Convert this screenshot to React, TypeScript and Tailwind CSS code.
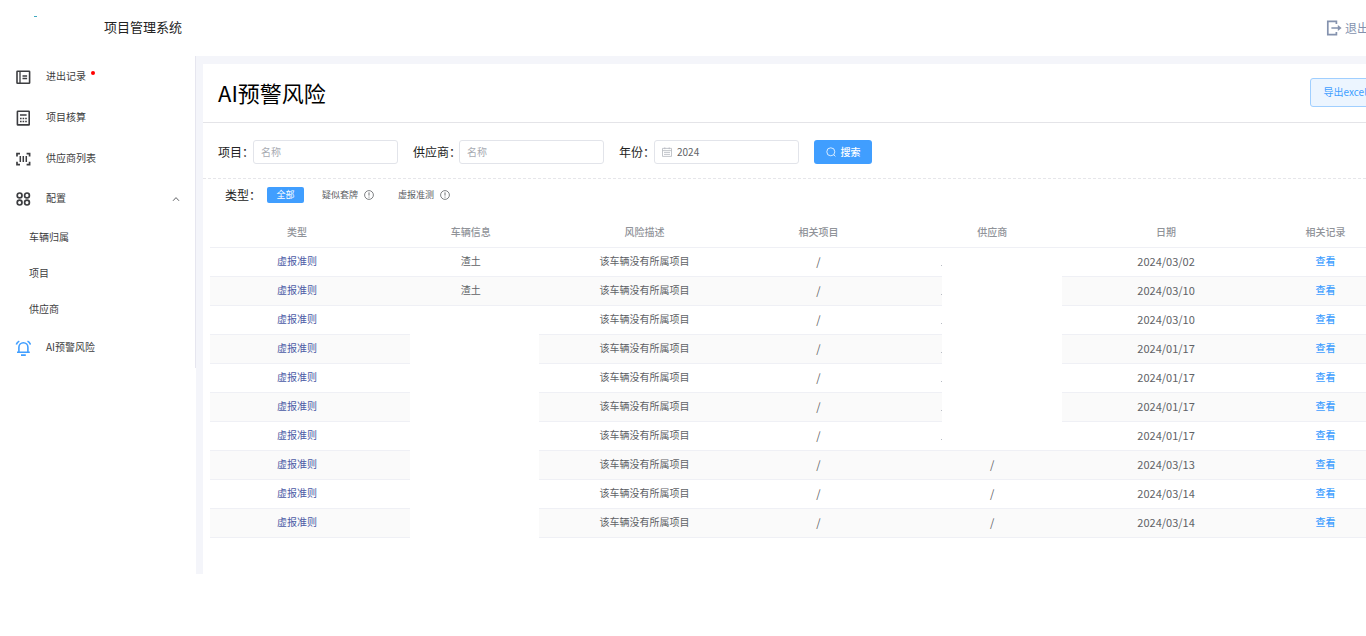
import React from 'react';

type Row = { vehicle?: string; supplier?: string; clipped?: boolean; date: string };

const rows: Row[] = [
  { vehicle: '渣土', clipped: true, date: '2024/03/02' },
  { vehicle: '渣土', clipped: true, date: '2024/03/10' },
  { clipped: true, date: '2024/03/10' },
  { clipped: true, date: '2024/01/17' },
  { clipped: true, date: '2024/01/17' },
  { clipped: true, date: '2024/01/17' },
  { clipped: true, date: '2024/01/17' },
  { supplier: '/', date: '2024/03/13' },
  { supplier: '/', date: '2024/03/14' },
  { supplier: '/', date: '2024/03/14' },
];

const headers = ['类型', '车辆信息', '风险描述', '相关项目', '供应商', '日期', '相关记录'];

const iconProps = {
  width: 16,
  height: 16,
  viewBox: '0 0 16 16',
  fill: 'none',
  stroke: 'currentColor',
  'aria-hidden': true,
} as const;

function RecordIcon() {
  return (
    <svg {...iconProps} strokeWidth="1.6">
      <rect x="2" y="2.2" width="12.6" height="12" rx="0.5" />
      <path d="M5 2v12" strokeWidth="1.3" />
      <path d="M7.5 7h4.6M7.5 9.5h4.6" strokeWidth="1.3" />
    </svg>
  );
}

function CalculatorIcon() {
  return (
    <svg {...iconProps} strokeWidth="1.6">
      <rect x="2.4" y="1.3" width="11.8" height="13.6" rx="0.5" />
      <path d="M5 5h6.6" strokeWidth="1.5" />
      <path d="M5 8.5h1.6M7.6 8.5h1.6M10.2 8.5h1.6M5 11.5h1.6M7.6 11.5h1.6M10.2 11.5h1.6" strokeWidth="1.6" />
    </svg>
  );
}

function ScanIcon() {
  return (
    <svg {...iconProps} strokeWidth="1.7">
      <path d="M2 5.4V2.6h3M11.6 2.6h3v2.8M14.6 10.8v2.8h-3M5 13.6H2v-2.8" />
      <path d="M5.3 5v6M8.3 5v6M11.3 5v6" strokeWidth="1.5" />
    </svg>
  );
}

function GridIcon() {
  return (
    <svg {...iconProps} strokeWidth="1.7">
      <circle cx="4.6" cy="4.4" r="2.4" />
      <circle cx="12" cy="4.4" r="2.4" />
      <circle cx="4.6" cy="11.6" r="2.4" />
      <circle cx="12" cy="11.6" r="2.4" />
    </svg>
  );
}

function BellIcon() {
  return (
    <svg {...iconProps} strokeWidth="1.6">
      <path d="M3.9 12V7.2a4.5 4.5 0 0 1 9 0V12M2 12.2h12.8M6 15.1h4.8" />
      <path d="M1.3 4.6C1.8 3 2.8 1.8 4.3 1.1M15.5 4.6C15 3 14 1.8 12.5 1.1" />
    </svg>
  );
}

function LogoutIcon() {
  return (
    <svg {...iconProps} strokeWidth="1.7">
      <path d="M10.4 4V1.4H1.8v13.2h8.6V12M5.4 8h8.6" />
      <path d="M11.8 5 15.6 8l-3.8 3z" fill="currentColor" stroke="none" />
    </svg>
  );
}

function InfoIcon() {
  return (
    <svg width="10" height="10" viewBox="0 0 10 10" fill="none" stroke="currentColor" aria-hidden>
      <circle cx="5" cy="5" r="4.4" strokeWidth="0.8" />
      <path d="M5 2.4v3.2M5 6.6v1" strokeWidth="0.9" />
    </svg>
  );
}

function NavItem({ icon, label, dot }: { icon: React.ReactNode; label: string; dot?: boolean }) {
  return (
    <a href="#" className="flex h-[41px] items-center gap-[15px] pl-[15px]">
      {icon}
      <span className="relative pb-0.5">
        {label}
        {dot && <span className="absolute -right-[9px] top-[3px] size-1 rounded-full bg-[#ff0000]" />}
      </span>
    </a>
  );
}

function Field({ id, label, wide, children }: { id: string; label: string; wide?: boolean; children: React.ReactNode }) {
  return (
    <div className="flex items-center">
      <label htmlFor={id} className={`${wide ? 'w-[46px]' : 'w-[35px]'} shrink-0 whitespace-nowrap text-xs text-[#222]`}>
        {label}
      </label>
      {children}
    </div>
  );
}

const inputClass =
  'h-6 w-[145px] rounded-[3px] border border-[#e2e4ea] bg-white px-[7px] text-[10px] text-[#606266] outline-none placeholder:text-[#a8abb2]';

export default function App() {
  return (
    <div className="min-h-screen overflow-hidden bg-white font-['Noto_Sans_CJK_SC',sans-serif] text-[10px] leading-4 text-[#3c3d40]">
      <header className="flex h-14 items-center justify-between">
        <div className="flex items-center pb-0.5">
          <span className="ml-[34px] h-px w-[3px] -translate-y-[11px] bg-[#3fa9c0]" />
          <h1 className="ml-[67px] text-[13px] text-[#222]">项目管理系统</h1>
        </div>
        <button className="-mr-[3px] flex shrink-0 items-center gap-[3px] text-xs text-[#8492ae]">
          <LogoutIcon />
          退出
        </button>
      </header>

      <div className="flex items-start">
        <nav className="w-[196px] shrink-0 border-r border-[#e6e6ef]">
          <NavItem icon={<RecordIcon />} label="进出记录" dot />
          <NavItem icon={<CalculatorIcon />} label="项目核算" />
          <NavItem icon={<ScanIcon />} label="供应商列表" />
          <button className="flex h-10 w-full items-center gap-[15px] pl-[15px] pr-[15px]">
            <GridIcon />
            <span className="grow pb-0.5 text-left">配置</span>
            <svg width="8" height="8" viewBox="0 0 8 8" fill="none" stroke="#606266" aria-hidden>
              <path d="M1 5.8 4 2.6l3 3.2" />
            </svg>
          </button>
          {['车辆归属', '项目', '供应商'].map((name) => (
            <a key={name} href="#" className="flex h-9 items-center pl-[29px]">
              {name}
            </a>
          ))}
          <NavItem
            icon={
              <span className="text-[#409eff]">
                <BellIcon />
              </span>
            }
            label="AI预警风险"
          />
        </nav>

        <div className="-mr-10 min-w-0 grow bg-[#f4f5fa] pl-[7px] pt-2">
          <main className="bg-white pb-9">
            <div className="flex h-[59px] items-center justify-between border-b border-[#e4e4e8] pb-0.5 pl-[15px] pr-[25px]">
              <h2 className="text-[22px] leading-8 text-black">AI预警风险</h2>
              <button className="h-[29px] rounded-[3px] border border-[#a0cfff] bg-[#ecf5ff] px-[13px] text-[10px] text-[#409eff]">
                导出excel
              </button>
            </div>

            <form className="flex h-14 items-center gap-[15px] border-b border-dashed border-[#e6e6ea] pl-[15px] pt-0.5">
              <Field id="project" label="项目：">
                <input id="project" placeholder="名称" className={inputClass} />
              </Field>
              <Field id="supplier" label="供应商：" wide>
                <input id="supplier" placeholder="名称" className={inputClass} />
              </Field>
              <Field id="year" label="年份：">
                <div className="flex h-6 w-[145px] items-center gap-[5px] rounded-[3px] border border-[#e2e4ea] px-[7px]">
                  <svg width="10" height="10" viewBox="0 0 10 10" fill="none" stroke="#b4b7be" strokeWidth="0.8" aria-hidden>
                    <path d="M.5 1.4h9v8h-9zM.5 3.6h9M2.8.4v1.8M7.2.4v1.8M2 5.4h6M2 7.4h6" />
                  </svg>
                  <input id="year" defaultValue="2024" className="min-w-0 grow text-[10px] text-[#606266] outline-none" />
                </div>
              </Field>
              <button
                type="button"
                className="flex h-6 w-[58px] items-center justify-center gap-[5px] rounded-[3px] bg-[#409eff] text-[10px] font-medium text-white"
              >
                <svg width="10" height="10" viewBox="0 0 10 10" fill="none" stroke="currentColor" strokeWidth="0.8" aria-hidden>
                  <circle cx="4.8" cy="4.8" r="4" />
                  <path d="m7.8 7.8 1.6 1.6" />
                </svg>
                搜索
              </button>
            </form>

            <div className="flex h-8 items-center pl-[22px]">
              <span className="w-[42px] text-xs text-[#222]">类型：</span>
              <button className="h-4 w-[37px] rounded-[2px] bg-[#409eff] text-[9px] leading-4 text-white">全部</button>
              <button className="ml-[18px] flex items-center gap-1.5 text-[9px] text-[#606266]">
                疑似套牌
                <InfoIcon />
              </button>
              <button className="ml-6 flex items-center gap-1.5 text-[9px] text-[#606266]">
                虚报准测
                <InfoIcon />
              </button>
            </div>

            <div className="relative ml-[7px] mr-2 pt-[7px]">
              <table className="w-full table-fixed border-separate border-spacing-0 text-center text-[#606266]">
                <thead>
                  <tr>
                    {headers.map((name, i) => (
                      <th
                        key={name}
                        className={`h-[30px] border-b border-[#eff0f5] p-0 pb-0.5 font-medium text-[#909399] ${i === 6 ? 'w-[145px]' : ''}`}
                      >
                        {name}
                      </th>
                    ))}
                  </tr>
                </thead>
                <tbody>
                  {rows.map((row, i) => (
                    <tr
                      key={i}
                      className="even:bg-[#fafafa] [&>td]:h-[29px] [&>td]:border-b [&>td]:border-[#eff0f5] [&>td]:p-0 [&>td]:pb-0.5"
                    >
                      <td className="text-[#4a5aa5]">虚报准则</td>
                      <td>{row.vehicle}</td>
                      <td>该车辆没有所属项目</td>
                      <td className="text-[11px]">/</td>
                      <td className="text-[11px]">
                        {row.clipped ? <span className="ml-9 mt-2 block size-px bg-[#b8bcc4]" /> : row.supplier}
                      </td>
                      <td className="text-[11px]">{row.date}</td>
                      <td>
                        <a href="#" className="font-medium text-[#409eff]">
                          查看
                        </a>
                      </td>
                    </tr>
                  ))}
                </tbody>
              </table>
              <div className="absolute bottom-0 left-[200px] top-[97px] w-[129px] bg-white" />
              <div className="absolute left-[732px] top-[40px] h-[197px] w-[120px] bg-white" />
            </div>
          </main>
        </div>
      </div>
    </div>
  );
}
